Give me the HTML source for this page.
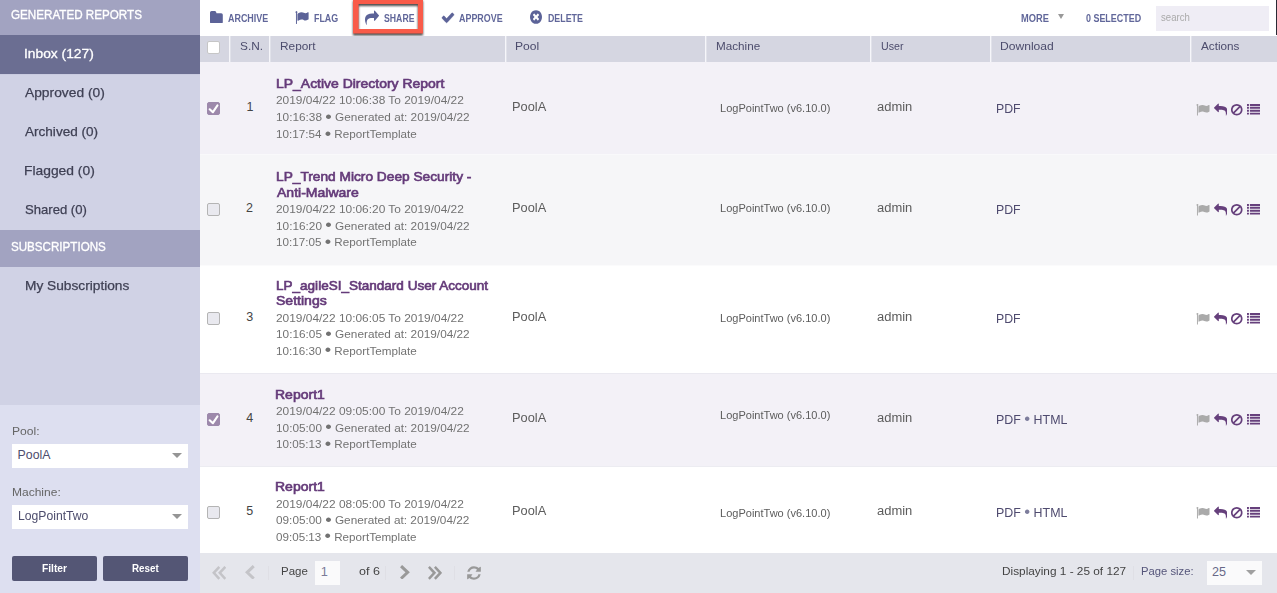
<!DOCTYPE html>
<html lang="en"><head><meta charset="utf-8"><title>Generated Reports</title>
<style>
*{box-sizing:border-box}
html,body{margin:0;padding:0}
body{width:1277px;height:593px;overflow:hidden;position:relative;background:#fff;font-family:"Liberation Sans",sans-serif;color:#444}
.abs{position:absolute}
.ic{position:absolute;display:block}
.bl{font-style:normal;font-size:17px;line-height:0;position:relative;top:0.5px}
.dlb .bl{color:#7d7d9c;top:0.3px}
.x{position:absolute;display:block;white-space:nowrap;transform-origin:0 50%}
#side{position:absolute;left:0;top:0;width:200px;height:593px;background:#d0d2e5}
.sh{position:absolute;left:0;width:200px;background:#a2a3c1}
.si{position:absolute;left:0;width:200px;height:39px}
.si.act{background:#6b6e92}
#filt{position:absolute;left:0;top:405px;width:200px;height:188px;background:#dddff0}
.sel{position:absolute;left:12px;width:176px;height:24px;background:#fff}
.sel:after{content:"";position:absolute;right:6.500px;top:8.500px;border-left:5px solid transparent;border-right:5px solid transparent;border-top:5.500px solid #959595}
.btn{position:absolute;top:556px;width:85px;height:25px;border-radius:2px;background:#545675}
#tb{position:absolute;left:0;top:0;width:1277px;height:36px}
#hl{position:absolute;left:349px;top:-4px;filter:drop-shadow(0.5px 2.5px 1px rgba(0,0,0,.7))}
#th{position:absolute;left:200px;top:36px;width:1077px;height:26px;background:#d5d6e1}
.sep{position:absolute;top:36px;width:1px;height:26px;background:#f6f6fa;box-shadow:1px 0 0 rgba(255,255,255,.3)}
.row{position:absolute;left:200px;width:1077px}
.cb{position:absolute;left:207px;width:13px;height:13px;border:1px solid #b4b4b4;border-radius:2px;background:#e9e9ef}
.cb.on{background:#9d89ab;border-color:#9d89ab}
#ft{position:absolute;left:200px;top:553px;width:1077px;height:40px;background:#e5e6ec}
</style></head>
<body>
<div id="side">
<div class="sh" style="top:0;height:35px"></div>
<div class="si act" style="top:35px"></div>
<div class="sh" style="top:230px;height:37px"></div>
<div id="filt"></div>
<div class="abs" style="left:0;top:74px;width:200px;height:1px;background:#c9cbe0"></div>
<span class="x" style="left:10.9px;top:7.3px;font-size:12.8px;line-height:15px;color:#fff;transform:scaleX(0.910);-webkit-text-stroke:0.35px #fff;">GENERATED REPORTS</span>
<span class="x" style="left:24.0px;top:46.0px;font-size:13.2px;line-height:15px;color:#fff;transform:scaleX(1.046);-webkit-text-stroke:0.3px #fff;">Inbox (127)</span>
<span class="x" style="left:25.2px;top:85.0px;font-size:13.2px;line-height:15px;color:#3f4054;transform:scaleX(1.046);-webkit-text-stroke:0.25px #3f4054;">Approved (0)</span>
<span class="x" style="left:25.2px;top:124.0px;font-size:13.2px;line-height:15px;color:#3f4054;transform:scaleX(1.028);-webkit-text-stroke:0.25px #3f4054;">Archived (0)</span>
<span class="x" style="left:24.2px;top:163.0px;font-size:13.2px;line-height:15px;color:#3f4054;transform:scaleX(1.049);-webkit-text-stroke:0.25px #3f4054;">Flagged (0)</span>
<span class="x" style="left:24.7px;top:202.0px;font-size:13.2px;line-height:15px;color:#3f4054;transform:scaleX(0.993);-webkit-text-stroke:0.25px #3f4054;">Shared (0)</span>
<span class="x" style="left:11.0px;top:239.0px;font-size:12.8px;line-height:15px;color:#fff;transform:scaleX(0.907);-webkit-text-stroke:0.35px #fff;">SUBSCRIPTIONS</span>
<span class="x" style="left:24.5px;top:277.9px;font-size:13.2px;line-height:15px;color:#3f4054;transform:scaleX(1.039);-webkit-text-stroke:0.25px #3f4054;">My Subscriptions</span>
<span class="x" style="left:11.8px;top:424.8px;font-size:10.7px;line-height:12px;color:#666;transform:scaleX(1.132);">Pool:</span>
<div class="sel" style="top:444px"></div>
<span class="x" style="left:17.6px;top:447.9px;font-size:12.3px;line-height:14px;color:#4d4d6d;">PoolA</span>
<span class="x" style="left:11.8px;top:485.8px;font-size:10.7px;line-height:12px;color:#666;transform:scaleX(1.124);">Machine:</span>
<div class="sel" style="top:505px"></div>
<span class="x" style="left:17.7px;top:508.9px;font-size:12.3px;line-height:14px;color:#4d4d6d;transform:scaleX(0.990);">LogPointTwo</span>
<div class="btn" style="left:12px"></div><div class="btn" style="left:103px"></div>
<span class="x" style="left:42.0px;top:562.1px;font-size:11px;line-height:12px;color:#fff;font-weight:bold;transform:scaleX(0.931);">Filter</span>
<span class="x" style="left:132.2px;top:562.1px;font-size:11px;line-height:12px;color:#fff;font-weight:bold;transform:scaleX(0.894);">Reset</span>
</div>
<div id="tb">
<svg class="ic" style="left:209.9px;top:10.5px" width="12.8" height="12.6" viewBox="0 0 13 13" preserveAspectRatio="none"><path fill="#5c6398" d="M1.600 0h3.200q1 0 1.400 1l.4 1.200h4.800q1.600 0 1.600 1.600v7.600q0 1.600-1.600 1.600h-9.800q-1.600 0-1.600-1.600v-9.800q0-1.600 1.600-1.600z"/></svg>
<span class="x" style="left:228.2px;top:11.6px;font-size:10.6px;line-height:12px;color:#61679a;font-weight:bold;transform:scaleX(0.844);">ARCHIVE</span>
<svg class="ic" style="left:295.4px;top:9.85px" width="13.6" height="15" viewBox="0 0 1792 1792" preserveAspectRatio="none"><path fill="#5c6398" d="M320 256q0 72-64 110v1266q0 13-9.500 22.500t-22.500 9.500h-64q-13 0-22.500-9.500t-9.500-22.500v-1266q-64-38-64-110 0-53 37.500-90.500t90.500-37.500 90.500 37.500 37.500 90.500zM1792 320v763q0 25-12.500 38.500t-39.500 27.500q-215 116-369 116-61 0-123.500-22t-108.500-48-115.500-48-142.500-22q-192 0-464 146-17 9-33 9-26 0-45-19t-19-45v-742q0-32 31-55 21-14 79-43 236-120 421-120 107 0 200 29t219 88q38 19 88 19 54 0 117.500-21t110-47 88-47 54.500-21q26 0 45 19t19 45z"/></svg>
<span class="x" style="left:314.1px;top:11.6px;font-size:10.6px;line-height:12px;color:#61679a;font-weight:bold;transform:scaleX(0.840);">FLAG</span>
<svg class="ic" style="left:364.8px;top:9.55px" width="14" height="16" viewBox="0 0 1792 1792" preserveAspectRatio="none"><path fill="#5c6398" d="M1792 640q0 26-19 45l-512 512q-19 19-45 19t-45-19-19-45v-256h-224q-98 0-175.500 6t-154 21.500-133 42.500-105.500 69.500-80 101-48.500 138.500-17.500 181q0 55 5 123 0 6 2.500 23.500t2.500 26.500q0 15-8.500 25t-23.500 10q-16 0-28-17-7-9-13-22t-13.500-30-10.500-24q-127-285-127-451 0-199 53-333 162-403 875-403h224v-256q0-26 19-45t45-19 45 19l512 512q19 19 19 45z"/></svg>
<span class="x" style="left:383.5px;top:11.6px;font-size:10.6px;line-height:12px;color:#61679a;font-weight:bold;transform:scaleX(0.822);">SHARE</span>
<svg class="ic" style="left:440.65px;top:10.3px" width="14" height="15.1" viewBox="0 0 1792 1792" preserveAspectRatio="none"><path fill="#5c6398" stroke="#5c6398" stroke-width="40" d="M1671 566q0 40-28 68l-724 724-136 136q-28 28-68 28t-68-28l-136-136-362-362q-28-28-28-68t28-68l136-136q28-28 68-28t68 28l294 295 656-657q28-28 68-28t68 28l136 136q28 28 28 68z"/></svg>
<span class="x" style="left:459.0px;top:11.6px;font-size:10.6px;line-height:12px;color:#61679a;font-weight:bold;transform:scaleX(0.842);">APPROVE</span>
<svg class="ic" style="left:529px;top:9.35px" width="14" height="16" viewBox="0 0 1792 1792" preserveAspectRatio="none"><path fill="#5c6398" d="M1277 1122q0-26-19-45l-181-181 181-181q19-19 19-45 0-27-19-46l-90-90q-19-19-46-19-26 0-45 19l-181 181-181-181q-19-19-45-19-27 0-46 19l-90 90q-19 19-19 46 0 26 19 45l181 181-181 181q-19 19-19 45 0 27 19 46l90 90q19 19 46 19 26 0 45-19l181-181 181 181q19 19 45 19 27 0 46-19l90-90q19-19 19-46zM1664 896q0 209-103 385.500t-279.500 279.500-385.500 103-385.500-103-279.500-279.500-103-385.500 103-385.500 279.500-279.500 385.500-103 385.500 103 279.500 279.500 103 385.500z"/></svg>
<span class="x" style="left:547.6px;top:11.6px;font-size:10.6px;line-height:12px;color:#61679a;font-weight:bold;transform:scaleX(0.833);">DELETE</span>
<span class="x" style="left:1021.4px;top:11.6px;font-size:10.6px;line-height:12px;color:#61679a;font-weight:bold;transform:scaleX(0.877);">MORE</span>
<div class="abs" style="left:1057.5px;top:14px;border-left:3.5px solid transparent;border-right:3.5px solid transparent;border-top:5px solid #999"></div>
<span class="x" style="left:1085.7px;top:11.6px;font-size:10.6px;line-height:12px;color:#61679a;font-weight:bold;transform:scaleX(0.843);">0 SELECTED</span>
<div class="abs" style="left:1156px;top:5.5px;width:112.5px;height:25px;background:#efedf5"></div>
<span class="x" style="left:1160.7px;top:11.2px;font-size:11px;line-height:12px;color:#aaa;transform:scaleX(0.872);">search</span>
<div class="abs" style="left:1275.5px;top:0;width:1.5px;height:35px;background:#2a2a35"></div>
</div>
<svg id="hl" width="80" height="44" viewBox="349 -4 80 44"><path fill="#f95b49" fill-rule="evenodd" d="M353 -1H423V33.6H353ZM358.6 4.100H417.9V28.900H358.6Z"/></svg>
<div id="th"></div>
<div class="cb" style="top:41px;background:#fff;border-color:#c6c6c6"></div>
<span class="x" style="left:239.6px;top:40.1px;font-size:10.9px;line-height:12px;color:#4c4c6c;transform:scaleX(1.086);">S.N.</span>
<span class="x" style="left:279.6px;top:40.1px;font-size:10.9px;line-height:12px;color:#4c4c6c;transform:scaleX(1.087);">Report</span>
<span class="x" style="left:515.4px;top:40.1px;font-size:10.9px;line-height:12px;color:#4c4c6c;transform:scaleX(1.109);">Pool</span>
<span class="x" style="left:715.5px;top:40.1px;font-size:10.9px;line-height:12px;color:#4c4c6c;transform:scaleX(1.072);">Machine</span>
<span class="x" style="left:881.0px;top:40.1px;font-size:10.9px;line-height:12px;color:#4c4c6c;transform:scaleX(0.978);">User</span>
<span class="x" style="left:1000.0px;top:40.1px;font-size:10.9px;line-height:12px;color:#4c4c6c;transform:scaleX(1.111);">Download</span>
<span class="x" style="left:1201.3px;top:40.1px;font-size:10.9px;line-height:12px;color:#4c4c6c;transform:scaleX(1.076);">Actions</span>
<div class="sep" style="left:229px"></div>
<div class="sep" style="left:269px"></div>
<div class="sep" style="left:505px"></div>
<div class="sep" style="left:705px"></div>
<div class="sep" style="left:870px"></div>
<div class="sep" style="left:990px"></div>
<div class="sep" style="left:1190px"></div>
<div class="row" style="top:62px;height:92px;background:#f3f1f7;border-top:1px solid #f3f1f7"></div>
<div class="cb on" style="top:102px"><svg class="ic" style="left:-1px;top:-1px" width="13" height="13" viewBox="0 0 13 13"><path d="M2.700 7.300L5.900 10.200L10.400 3.500" fill="none" stroke="#fff" stroke-width="2.200" stroke-linecap="round" stroke-linejoin="round"/></svg></div>
<span class="x" style="left:246.4px;top:100.0px;font-size:12.5px;line-height:14px;color:#444;">1</span>
<span class="x" style="left:275.5px;top:76.2px;font-size:13.2px;line-height:15px;color:#643a79;transform:scaleX(1.058);-webkit-text-stroke:0.65px #643a79;">LP_Active Directory Report</span>
<span class="x" style="left:276.0px;top:94.1px;font-size:10.8px;line-height:12px;color:#727272;transform:scaleX(1.103);">2019/04/22 10:06:38 To 2019/04/22</span>
<span class="x" style="left:275.7px;top:111.0px;font-size:10.8px;line-height:12px;color:#727272;transform:scaleX(1.094);">10:16:38 <i class="bl">&bull;</i> Generated at: 2019/04/22</span>
<span class="x" style="left:275.7px;top:128.0px;font-size:10.8px;line-height:12px;color:#727272;transform:scaleX(1.081);">10:17:54 <i class="bl">&bull;</i> ReportTemplate</span>
<span class="x" style="left:511.5px;top:100.0px;font-size:12.5px;line-height:14px;color:#5c5c5c;transform:scaleX(1.025);">PoolA</span>
<span class="x" style="left:720.3px;top:102.8px;font-size:10.4px;line-height:11px;color:#5c5c5c;transform:scaleX(1.061);">LogPointTwo (v6.10.0)</span>
<span class="x" style="left:876.6px;top:100.1px;font-size:12.5px;line-height:14px;color:#5c5c5c;transform:scaleX(1.037);">admin</span>
<span class="x dlb" style="left:996.3px;top:102.1px;font-size:12.6px;line-height:14px;color:#4f4b6f;transform:scaleX(0.976);">PDF</span>
<svg class="ic " style="left:1196.4px;top:102.5px" width="13.5" height="13.5" viewBox="0 0 1792 1792"><path fill="#aaaaaa" d="M320 256q0 72-64 110v1266q0 13-9.500 22.500t-22.500 9.500h-64q-13 0-22.500-9.500t-9.500-22.500v-1266q-64-38-64-110 0-53 37.500-90.500t90.500-37.500 90.500 37.500 37.500 90.500zM1792 320v763q0 25-12.500 38.500t-39.500 27.500q-215 116-369 116-61 0-123.500-22t-108.500-48-115.500-48-142.500-22q-192 0-464 146-17 9-33 9-26 0-45-19t-19-45v-742q0-32 31-55 21-14 79-43 236-120 421-120 107 0 200 29t219 88q38 19 88 19 54 0 117.500-21t110-47 88-47 54.500-21q26 0 45 19t19 45z"/></svg>
<svg class="ic " style="left:1213.9px;top:102.5px" width="13.5" height="13.5" viewBox="0 0 1792 1792"><path fill="#66407c" d="M1792 1120q0 166-127 451-3 7-10.500 24t-13.500 30-13 22q-12 17-28 17-15 0-23.500-10t-8.500-25q0-9 2.500-26.500t2.500-23.500q5-68 5-123 0-101-17.500-181t-48.500-138.500-80-101-105.500-69.500-133-42.500-154-21.500-175.500-6h-224v256q0 26-19 45t-45 19-45-19l-512-512q-19-19-19-45t19-45l512-512q19-19 45-19t45 19 19 45v256h224q713 0 875 403 53 134 53 333z"/></svg>
<svg class="ic " style="left:1230.1px;top:102.5px" width="13.5" height="13.5" viewBox="0 0 1792 1792"><path fill="#66407c" d="M1440 893q0-161-87-295l-754 753q137 89 297 89 111 0 211.500-43.500t173.500-116.500 116-174.500 43-212.500zM439 1194l755-754q-135-91-298-91-148 0-273 73t-198 199-73 274q0 162 88 299zM1664 893q0 157-61 300t-163.500 246-245 164-298.500 61-298.500-61-245-164-163.500-246-61-300 61-299.500 163.500-245.500 245-164 298.500-61 298.500 61 245 164 163.500 245.500 61 299.500z"/></svg>
<svg class="ic " style="left:1246.7px;top:102.5px" width="13.5" height="13.5" viewBox="0 0 1792 1792"><path fill="#66407c" d="M256 1312v192q0 13-9.500 22.500t-22.500 9.500h-192q-13 0-22.500-9.500t-9.500-22.500v-192q0-13 9.500-22.500t22.500-9.500h192q13 0 22.500 9.500t9.500 22.500zM256 928v192q0 13-9.500 22.500t-22.500 9.500h-192q-13 0-22.500-9.500t-9.500-22.500v-192q0-13 9.500-22.500t22.500-9.500h192q13 0 22.500 9.500t9.500 22.500zM256 544v192q0 13-9.500 22.500t-22.500 9.500h-192q-13 0-22.500-9.500t-9.500-22.500v-192q0-13 9.500-22.500t22.500-9.500h192q13 0 22.500 9.500t9.500 22.500zM1792 1312v192q0 13-9.500 22.500t-22.500 9.500h-1344q-13 0-22.500-9.500t-9.500-22.500v-192q0-13 9.500-22.500t22.500-9.500h1344q13 0 22.500 9.500t9.500 22.500zM256 160v192q0 13-9.500 22.500t-22.500 9.500h-192q-13 0-22.500-9.500t-9.500-22.500v-192q0-13 9.500-22.500t22.500-9.500h192q13 0 22.500 9.500t9.500 22.500zM1792 928v192q0 13-9.500 22.500t-22.500 9.500h-1344q-13 0-22.500-9.500t-9.500-22.500v-192q0-13 9.500-22.500t22.500-9.500h1344q13 0 22.500 9.500t9.500 22.500zM1792 544v192q0 13-9.500 22.500t-22.500 9.500h-1344q-13 0-22.500-9.500t-9.500-22.500v-192q0-13 9.500-22.500t22.500-9.500h1344q13 0 22.500 9.500t9.500 22.500zM1792 160v192q0 13-9.500 22.500t-22.500 9.500h-1344q-13 0-22.500-9.500t-9.500-22.500v-192q0-13 9.500-22.500t22.500-9.500h1344q13 0 22.500 9.500t9.500 22.500z"/></svg>
<div class="row" style="top:154px;height:111px;background:#f6f6f8;border-top:1px solid #f9f9fb"></div>
<div class="cb" style="top:203px"></div>
<span class="x" style="left:246.1px;top:200.8px;font-size:12.5px;line-height:14px;color:#444;">2</span>
<span class="x" style="left:275.5px;top:168.5px;font-size:13.2px;line-height:15px;color:#643a79;transform:scaleX(1.040);-webkit-text-stroke:0.65px #643a79;">LP_Trend Micro Deep Security -</span>
<span class="x" style="left:276.6px;top:184.5px;font-size:13.2px;line-height:15px;color:#643a79;transform:scaleX(1.063);-webkit-text-stroke:0.65px #643a79;">Anti-Malware</span>
<span class="x" style="left:276.0px;top:202.7px;font-size:10.8px;line-height:12px;color:#727272;transform:scaleX(1.103);">2019/04/22 10:06:20 To 2019/04/22</span>
<span class="x" style="left:275.7px;top:219.5px;font-size:10.8px;line-height:12px;color:#727272;transform:scaleX(1.094);">10:16:20 <i class="bl">&bull;</i> Generated at: 2019/04/22</span>
<span class="x" style="left:275.7px;top:236.3px;font-size:10.8px;line-height:12px;color:#727272;transform:scaleX(1.081);">10:17:05 <i class="bl">&bull;</i> ReportTemplate</span>
<span class="x" style="left:511.5px;top:200.8px;font-size:12.5px;line-height:14px;color:#5c5c5c;transform:scaleX(1.025);">PoolA</span>
<span class="x" style="left:720.3px;top:203.4px;font-size:10.4px;line-height:11px;color:#5c5c5c;transform:scaleX(1.061);">LogPointTwo (v6.10.0)</span>
<span class="x" style="left:876.6px;top:200.9px;font-size:12.5px;line-height:14px;color:#5c5c5c;transform:scaleX(1.037);">admin</span>
<span class="x dlb" style="left:996.3px;top:202.9px;font-size:12.6px;line-height:14px;color:#4f4b6f;transform:scaleX(0.976);">PDF</span>
<svg class="ic " style="left:1196.4px;top:203.4px" width="13.5" height="13.5" viewBox="0 0 1792 1792"><path fill="#aaaaaa" d="M320 256q0 72-64 110v1266q0 13-9.500 22.500t-22.500 9.500h-64q-13 0-22.500-9.500t-9.500-22.500v-1266q-64-38-64-110 0-53 37.500-90.500t90.500-37.500 90.500 37.500 37.500 90.500zM1792 320v763q0 25-12.500 38.500t-39.500 27.500q-215 116-369 116-61 0-123.500-22t-108.500-48-115.500-48-142.500-22q-192 0-464 146-17 9-33 9-26 0-45-19t-19-45v-742q0-32 31-55 21-14 79-43 236-120 421-120 107 0 200 29t219 88q38 19 88 19 54 0 117.500-21t110-47 88-47 54.500-21q26 0 45 19t19 45z"/></svg>
<svg class="ic " style="left:1213.9px;top:203.4px" width="13.5" height="13.5" viewBox="0 0 1792 1792"><path fill="#66407c" d="M1792 1120q0 166-127 451-3 7-10.500 24t-13.500 30-13 22q-12 17-28 17-15 0-23.500-10t-8.500-25q0-9 2.500-26.500t2.500-23.500q5-68 5-123 0-101-17.500-181t-48.500-138.500-80-101-105.500-69.500-133-42.500-154-21.500-175.500-6h-224v256q0 26-19 45t-45 19-45-19l-512-512q-19-19-19-45t19-45l512-512q19-19 45-19t45 19 19 45v256h224q713 0 875 403 53 134 53 333z"/></svg>
<svg class="ic " style="left:1230.1px;top:203.4px" width="13.5" height="13.5" viewBox="0 0 1792 1792"><path fill="#66407c" d="M1440 893q0-161-87-295l-754 753q137 89 297 89 111 0 211.500-43.500t173.500-116.500 116-174.500 43-212.500zM439 1194l755-754q-135-91-298-91-148 0-273 73t-198 199-73 274q0 162 88 299zM1664 893q0 157-61 300t-163.500 246-245 164-298.500 61-298.500-61-245-164-163.500-246-61-300 61-299.500 163.500-245.500 245-164 298.500-61 298.500 61 245 164 163.500 245.500 61 299.500z"/></svg>
<svg class="ic " style="left:1246.7px;top:203.4px" width="13.5" height="13.5" viewBox="0 0 1792 1792"><path fill="#66407c" d="M256 1312v192q0 13-9.500 22.500t-22.500 9.500h-192q-13 0-22.500-9.500t-9.500-22.500v-192q0-13 9.500-22.500t22.500-9.500h192q13 0 22.500 9.500t9.500 22.500zM256 928v192q0 13-9.500 22.500t-22.500 9.500h-192q-13 0-22.500-9.500t-9.500-22.500v-192q0-13 9.500-22.500t22.500-9.500h192q13 0 22.500 9.500t9.500 22.500zM256 544v192q0 13-9.500 22.500t-22.500 9.500h-192q-13 0-22.500-9.500t-9.500-22.500v-192q0-13 9.500-22.500t22.500-9.500h192q13 0 22.500 9.500t9.500 22.500zM1792 1312v192q0 13-9.500 22.500t-22.500 9.500h-1344q-13 0-22.500-9.500t-9.500-22.500v-192q0-13 9.500-22.500t22.500-9.500h1344q13 0 22.500 9.500t9.500 22.500zM256 160v192q0 13-9.500 22.500t-22.500 9.500h-192q-13 0-22.500-9.500t-9.500-22.500v-192q0-13 9.500-22.500t22.500-9.500h192q13 0 22.500 9.500t9.500 22.500zM1792 928v192q0 13-9.500 22.500t-22.500 9.500h-1344q-13 0-22.500-9.500t-9.500-22.500v-192q0-13 9.500-22.500t22.500-9.500h1344q13 0 22.500 9.500t9.500 22.500zM1792 544v192q0 13-9.500 22.500t-22.500 9.500h-1344q-13 0-22.500-9.500t-9.500-22.500v-192q0-13 9.500-22.500t22.500-9.500h1344q13 0 22.500 9.500t9.500 22.500zM1792 160v192q0 13-9.500 22.500t-22.500 9.500h-1344q-13 0-22.500-9.500t-9.500-22.500v-192q0-13 9.500-22.500t22.500-9.500h1344q13 0 22.500 9.500t9.500 22.500z"/></svg>
<div class="row" style="top:265px;height:108px;background:#ffffff;border-top:1px solid #fbfbfc"></div>
<div class="cb" style="top:312px"></div>
<span class="x" style="left:246.2px;top:310.1px;font-size:12.5px;line-height:14px;color:#444;">3</span>
<span class="x" style="left:275.5px;top:277.8px;font-size:13.2px;line-height:15px;color:#643a79;transform:scaleX(1.026);-webkit-text-stroke:0.65px #643a79;">LP_agileSI_Standard User Account</span>
<span class="x" style="left:276.0px;top:293.4px;font-size:13.2px;line-height:15px;color:#643a79;transform:scaleX(1.064);-webkit-text-stroke:0.65px #643a79;">Settings</span>
<span class="x" style="left:276.0px;top:311.6px;font-size:10.8px;line-height:12px;color:#727272;transform:scaleX(1.103);">2019/04/22 10:06:05 To 2019/04/22</span>
<span class="x" style="left:275.7px;top:328.1px;font-size:10.8px;line-height:12px;color:#727272;transform:scaleX(1.094);">10:16:05 <i class="bl">&bull;</i> Generated at: 2019/04/22</span>
<span class="x" style="left:275.7px;top:344.9px;font-size:10.8px;line-height:12px;color:#727272;transform:scaleX(1.081);">10:16:30 <i class="bl">&bull;</i> ReportTemplate</span>
<span class="x" style="left:511.5px;top:310.1px;font-size:12.5px;line-height:14px;color:#5c5c5c;transform:scaleX(1.025);">PoolA</span>
<span class="x" style="left:720.3px;top:312.8px;font-size:10.4px;line-height:11px;color:#5c5c5c;transform:scaleX(1.061);">LogPointTwo (v6.10.0)</span>
<span class="x" style="left:876.6px;top:310.1px;font-size:12.5px;line-height:14px;color:#5c5c5c;transform:scaleX(1.037);">admin</span>
<span class="x dlb" style="left:996.3px;top:312.2px;font-size:12.6px;line-height:14px;color:#4f4b6f;transform:scaleX(0.976);">PDF</span>
<svg class="ic " style="left:1196.4px;top:312.2px" width="13.5" height="13.5" viewBox="0 0 1792 1792"><path fill="#aaaaaa" d="M320 256q0 72-64 110v1266q0 13-9.500 22.500t-22.500 9.500h-64q-13 0-22.500-9.500t-9.500-22.500v-1266q-64-38-64-110 0-53 37.500-90.500t90.500-37.500 90.500 37.500 37.500 90.500zM1792 320v763q0 25-12.500 38.500t-39.500 27.500q-215 116-369 116-61 0-123.500-22t-108.500-48-115.500-48-142.500-22q-192 0-464 146-17 9-33 9-26 0-45-19t-19-45v-742q0-32 31-55 21-14 79-43 236-120 421-120 107 0 200 29t219 88q38 19 88 19 54 0 117.500-21t110-47 88-47 54.500-21q26 0 45 19t19 45z"/></svg>
<svg class="ic " style="left:1213.9px;top:312.2px" width="13.5" height="13.5" viewBox="0 0 1792 1792"><path fill="#66407c" d="M1792 1120q0 166-127 451-3 7-10.500 24t-13.500 30-13 22q-12 17-28 17-15 0-23.500-10t-8.500-25q0-9 2.500-26.500t2.500-23.500q5-68 5-123 0-101-17.500-181t-48.500-138.500-80-101-105.500-69.500-133-42.500-154-21.500-175.500-6h-224v256q0 26-19 45t-45 19-45-19l-512-512q-19-19-19-45t19-45l512-512q19-19 45-19t45 19 19 45v256h224q713 0 875 403 53 134 53 333z"/></svg>
<svg class="ic " style="left:1230.1px;top:312.2px" width="13.5" height="13.5" viewBox="0 0 1792 1792"><path fill="#66407c" d="M1440 893q0-161-87-295l-754 753q137 89 297 89 111 0 211.500-43.500t173.500-116.500 116-174.500 43-212.500zM439 1194l755-754q-135-91-298-91-148 0-273 73t-198 199-73 274q0 162 88 299zM1664 893q0 157-61 300t-163.500 246-245 164-298.500 61-298.500-61-245-164-163.500-246-61-300 61-299.500 163.500-245.500 245-164 298.500-61 298.500 61 245 164 163.500 245.500 61 299.500z"/></svg>
<svg class="ic " style="left:1246.7px;top:312.2px" width="13.5" height="13.5" viewBox="0 0 1792 1792"><path fill="#66407c" d="M256 1312v192q0 13-9.500 22.500t-22.500 9.500h-192q-13 0-22.500-9.500t-9.500-22.500v-192q0-13 9.500-22.500t22.500-9.500h192q13 0 22.500 9.500t9.500 22.500zM256 928v192q0 13-9.500 22.500t-22.500 9.500h-192q-13 0-22.500-9.500t-9.500-22.500v-192q0-13 9.500-22.500t22.500-9.500h192q13 0 22.500 9.500t9.500 22.500zM256 544v192q0 13-9.500 22.500t-22.500 9.500h-192q-13 0-22.500-9.500t-9.500-22.500v-192q0-13 9.500-22.500t22.500-9.500h192q13 0 22.500 9.500t9.500 22.500zM1792 1312v192q0 13-9.500 22.500t-22.500 9.500h-1344q-13 0-22.500-9.500t-9.500-22.500v-192q0-13 9.500-22.500t22.500-9.500h1344q13 0 22.500 9.500t9.500 22.500zM256 160v192q0 13-9.500 22.500t-22.500 9.500h-192q-13 0-22.500-9.500t-9.500-22.500v-192q0-13 9.500-22.500t22.500-9.500h192q13 0 22.500 9.500t9.500 22.500zM1792 928v192q0 13-9.500 22.500t-22.500 9.500h-1344q-13 0-22.500-9.500t-9.500-22.500v-192q0-13 9.500-22.500t22.500-9.500h1344q13 0 22.500 9.500t9.500 22.500zM1792 544v192q0 13-9.500 22.500t-22.500 9.500h-1344q-13 0-22.500-9.500t-9.500-22.500v-192q0-13 9.500-22.500t22.500-9.500h1344q13 0 22.500 9.500t9.500 22.500zM1792 160v192q0 13-9.500 22.500t-22.500 9.500h-1344q-13 0-22.500-9.500t-9.500-22.500v-192q0-13 9.500-22.500t22.500-9.500h1344q13 0 22.500 9.500t9.500 22.500z"/></svg>
<div class="row" style="top:373px;height:93px;background:#f3f1f7;border-top:1px solid #eae9f0"></div>
<div class="cb on" style="top:413px"><svg class="ic" style="left:-1px;top:-1px" width="13" height="13" viewBox="0 0 13 13"><path d="M2.700 7.300L5.900 10.200L10.400 3.500" fill="none" stroke="#fff" stroke-width="2.200" stroke-linecap="round" stroke-linejoin="round"/></svg></div>
<span class="x" style="left:246.2px;top:410.8px;font-size:12.5px;line-height:14px;color:#444;">4</span>
<span class="x" style="left:275.4px;top:386.6px;font-size:13.2px;line-height:15px;color:#643a79;transform:scaleX(1.063);-webkit-text-stroke:0.65px #643a79;">Report1</span>
<span class="x" style="left:276.0px;top:404.8px;font-size:10.8px;line-height:12px;color:#727272;transform:scaleX(1.103);">2019/04/22 09:05:00 To 2019/04/22</span>
<span class="x" style="left:275.7px;top:421.6px;font-size:10.8px;line-height:12px;color:#727272;transform:scaleX(1.094);">10:05:00 <i class="bl">&bull;</i> Generated at: 2019/04/22</span>
<span class="x" style="left:275.7px;top:438.4px;font-size:10.8px;line-height:12px;color:#727272;transform:scaleX(1.081);">10:05:13 <i class="bl">&bull;</i> ReportTemplate</span>
<span class="x" style="left:511.5px;top:410.8px;font-size:12.5px;line-height:14px;color:#5c5c5c;transform:scaleX(1.025);">PoolA</span>
<span class="x" style="left:720.3px;top:409.8px;font-size:10.4px;line-height:11px;color:#5c5c5c;transform:scaleX(1.061);">LogPointTwo (v6.10.0)</span>
<span class="x" style="left:876.6px;top:410.9px;font-size:12.5px;line-height:14px;color:#5c5c5c;transform:scaleX(1.037);">admin</span>
<span class="x dlb" style="left:996.3px;top:412.9px;font-size:12.6px;line-height:14px;color:#4f4b6f;transform:scaleX(0.986);">PDF <i class="bl">&bull;</i> HTML</span>
<svg class="ic " style="left:1196.4px;top:413.1px" width="13.5" height="13.5" viewBox="0 0 1792 1792"><path fill="#aaaaaa" d="M320 256q0 72-64 110v1266q0 13-9.500 22.500t-22.500 9.500h-64q-13 0-22.500-9.500t-9.500-22.500v-1266q-64-38-64-110 0-53 37.500-90.500t90.500-37.500 90.500 37.500 37.500 90.500zM1792 320v763q0 25-12.500 38.500t-39.500 27.500q-215 116-369 116-61 0-123.500-22t-108.500-48-115.500-48-142.500-22q-192 0-464 146-17 9-33 9-26 0-45-19t-19-45v-742q0-32 31-55 21-14 79-43 236-120 421-120 107 0 200 29t219 88q38 19 88 19 54 0 117.500-21t110-47 88-47 54.500-21q26 0 45 19t19 45z"/></svg>
<svg class="ic " style="left:1213.9px;top:413.1px" width="13.5" height="13.5" viewBox="0 0 1792 1792"><path fill="#66407c" d="M1792 1120q0 166-127 451-3 7-10.500 24t-13.500 30-13 22q-12 17-28 17-15 0-23.500-10t-8.500-25q0-9 2.500-26.500t2.500-23.500q5-68 5-123 0-101-17.500-181t-48.500-138.500-80-101-105.500-69.500-133-42.500-154-21.500-175.500-6h-224v256q0 26-19 45t-45 19-45-19l-512-512q-19-19-19-45t19-45l512-512q19-19 45-19t45 19 19 45v256h224q713 0 875 403 53 134 53 333z"/></svg>
<svg class="ic " style="left:1230.1px;top:413.1px" width="13.5" height="13.5" viewBox="0 0 1792 1792"><path fill="#66407c" d="M1440 893q0-161-87-295l-754 753q137 89 297 89 111 0 211.500-43.500t173.500-116.500 116-174.500 43-212.500zM439 1194l755-754q-135-91-298-91-148 0-273 73t-198 199-73 274q0 162 88 299zM1664 893q0 157-61 300t-163.500 246-245 164-298.500 61-298.500-61-245-164-163.500-246-61-300 61-299.500 163.500-245.500 245-164 298.500-61 298.500 61 245 164 163.500 245.500 61 299.500z"/></svg>
<svg class="ic " style="left:1246.7px;top:413.1px" width="13.5" height="13.5" viewBox="0 0 1792 1792"><path fill="#66407c" d="M256 1312v192q0 13-9.500 22.500t-22.500 9.500h-192q-13 0-22.500-9.500t-9.500-22.500v-192q0-13 9.500-22.500t22.500-9.500h192q13 0 22.500 9.500t9.500 22.500zM256 928v192q0 13-9.500 22.500t-22.500 9.500h-192q-13 0-22.500-9.500t-9.500-22.500v-192q0-13 9.500-22.500t22.500-9.500h192q13 0 22.500 9.500t9.500 22.500zM256 544v192q0 13-9.500 22.500t-22.500 9.500h-192q-13 0-22.500-9.500t-9.500-22.500v-192q0-13 9.500-22.500t22.500-9.500h192q13 0 22.500 9.500t9.500 22.500zM1792 1312v192q0 13-9.500 22.500t-22.500 9.500h-1344q-13 0-22.500-9.500t-9.500-22.500v-192q0-13 9.500-22.500t22.500-9.500h1344q13 0 22.500 9.500t9.500 22.500zM256 160v192q0 13-9.500 22.500t-22.500 9.500h-192q-13 0-22.500-9.500t-9.500-22.500v-192q0-13 9.500-22.500t22.500-9.500h192q13 0 22.500 9.500t9.500 22.500zM1792 928v192q0 13-9.500 22.500t-22.500 9.500h-1344q-13 0-22.500-9.500t-9.500-22.500v-192q0-13 9.500-22.500t22.500-9.500h1344q13 0 22.500 9.500t9.500 22.500zM1792 544v192q0 13-9.500 22.500t-22.500 9.500h-1344q-13 0-22.500-9.500t-9.500-22.500v-192q0-13 9.500-22.500t22.500-9.500h1344q13 0 22.500 9.500t9.500 22.500zM1792 160v192q0 13-9.500 22.500t-22.500 9.500h-1344q-13 0-22.500-9.500t-9.500-22.500v-192q0-13 9.500-22.500t22.500-9.500h1344q13 0 22.500 9.500t9.500 22.500z"/></svg>
<div class="row" style="top:466px;height:87px;background:#ffffff;border-top:1px solid #ececf1"></div>
<div class="cb" style="top:506px"></div>
<span class="x" style="left:246.2px;top:503.8px;font-size:12.5px;line-height:14px;color:#444;">5</span>
<span class="x" style="left:275.4px;top:479.2px;font-size:13.2px;line-height:15px;color:#643a79;transform:scaleX(1.063);-webkit-text-stroke:0.65px #643a79;">Report1</span>
<span class="x" style="left:276.0px;top:497.6px;font-size:10.8px;line-height:12px;color:#727272;transform:scaleX(1.103);">2019/04/22 08:05:00 To 2019/04/22</span>
<span class="x" style="left:276.1px;top:514.0px;font-size:10.8px;line-height:12px;color:#727272;transform:scaleX(1.092);">09:05:00 <i class="bl">&bull;</i> Generated at: 2019/04/22</span>
<span class="x" style="left:276.1px;top:530.7px;font-size:10.8px;line-height:12px;color:#727272;transform:scaleX(1.078);">09:05:13 <i class="bl">&bull;</i> ReportTemplate</span>
<span class="x" style="left:511.5px;top:503.8px;font-size:12.5px;line-height:14px;color:#5c5c5c;transform:scaleX(1.025);">PoolA</span>
<span class="x" style="left:720.3px;top:507.8px;font-size:10.4px;line-height:11px;color:#5c5c5c;transform:scaleX(1.061);">LogPointTwo (v6.10.0)</span>
<span class="x" style="left:876.6px;top:503.8px;font-size:12.5px;line-height:14px;color:#5c5c5c;transform:scaleX(1.037);">admin</span>
<span class="x dlb" style="left:996.3px;top:505.9px;font-size:12.6px;line-height:14px;color:#4f4b6f;transform:scaleX(0.986);">PDF <i class="bl">&bull;</i> HTML</span>
<svg class="ic " style="left:1196.4px;top:506.1px" width="13.5" height="13.5" viewBox="0 0 1792 1792"><path fill="#aaaaaa" d="M320 256q0 72-64 110v1266q0 13-9.500 22.500t-22.500 9.500h-64q-13 0-22.500-9.500t-9.500-22.500v-1266q-64-38-64-110 0-53 37.500-90.500t90.500-37.500 90.500 37.500 37.500 90.500zM1792 320v763q0 25-12.500 38.500t-39.500 27.500q-215 116-369 116-61 0-123.500-22t-108.500-48-115.500-48-142.500-22q-192 0-464 146-17 9-33 9-26 0-45-19t-19-45v-742q0-32 31-55 21-14 79-43 236-120 421-120 107 0 200 29t219 88q38 19 88 19 54 0 117.500-21t110-47 88-47 54.500-21q26 0 45 19t19 45z"/></svg>
<svg class="ic " style="left:1213.9px;top:506.1px" width="13.5" height="13.5" viewBox="0 0 1792 1792"><path fill="#66407c" d="M1792 1120q0 166-127 451-3 7-10.500 24t-13.500 30-13 22q-12 17-28 17-15 0-23.500-10t-8.500-25q0-9 2.500-26.500t2.500-23.500q5-68 5-123 0-101-17.500-181t-48.500-138.500-80-101-105.500-69.500-133-42.500-154-21.500-175.500-6h-224v256q0 26-19 45t-45 19-45-19l-512-512q-19-19-19-45t19-45l512-512q19-19 45-19t45 19 19 45v256h224q713 0 875 403 53 134 53 333z"/></svg>
<svg class="ic " style="left:1230.1px;top:506.1px" width="13.5" height="13.5" viewBox="0 0 1792 1792"><path fill="#66407c" d="M1440 893q0-161-87-295l-754 753q137 89 297 89 111 0 211.500-43.500t173.500-116.500 116-174.500 43-212.500zM439 1194l755-754q-135-91-298-91-148 0-273 73t-198 199-73 274q0 162 88 299zM1664 893q0 157-61 300t-163.500 246-245 164-298.500 61-298.500-61-245-164-163.500-246-61-300 61-299.500 163.500-245.500 245-164 298.500-61 298.500 61 245 164 163.500 245.500 61 299.500z"/></svg>
<svg class="ic " style="left:1246.7px;top:506.1px" width="13.5" height="13.5" viewBox="0 0 1792 1792"><path fill="#66407c" d="M256 1312v192q0 13-9.500 22.500t-22.500 9.500h-192q-13 0-22.500-9.500t-9.500-22.500v-192q0-13 9.500-22.500t22.500-9.500h192q13 0 22.500 9.500t9.500 22.500zM256 928v192q0 13-9.500 22.500t-22.500 9.500h-192q-13 0-22.500-9.500t-9.500-22.500v-192q0-13 9.500-22.500t22.500-9.500h192q13 0 22.500 9.500t9.500 22.500zM256 544v192q0 13-9.500 22.500t-22.500 9.500h-192q-13 0-22.500-9.500t-9.500-22.500v-192q0-13 9.500-22.500t22.500-9.500h192q13 0 22.500 9.500t9.500 22.500zM1792 1312v192q0 13-9.500 22.500t-22.500 9.500h-1344q-13 0-22.500-9.500t-9.500-22.500v-192q0-13 9.500-22.500t22.500-9.500h1344q13 0 22.500 9.500t9.500 22.500zM256 160v192q0 13-9.500 22.500t-22.500 9.500h-192q-13 0-22.500-9.500t-9.500-22.500v-192q0-13 9.500-22.500t22.500-9.500h192q13 0 22.500 9.500t9.500 22.500zM1792 928v192q0 13-9.500 22.500t-22.500 9.500h-1344q-13 0-22.500-9.500t-9.500-22.500v-192q0-13 9.500-22.500t22.500-9.500h1344q13 0 22.500 9.500t9.500 22.500zM1792 544v192q0 13-9.500 22.500t-22.500 9.500h-1344q-13 0-22.500-9.500t-9.500-22.500v-192q0-13 9.500-22.500t22.500-9.500h1344q13 0 22.500 9.500t9.500 22.500zM1792 160v192q0 13-9.500 22.500t-22.500 9.500h-1344q-13 0-22.500-9.500t-9.500-22.500v-192q0-13 9.500-22.500t22.500-9.500h1344q13 0 22.500 9.500t9.500 22.500z"/></svg>
<div id="ft"></div>
<svg class="ic" style="left:212px;top:566px" width="14.2" height="13.7" viewBox="0 0 14.2 13.7"><path d="M7.32 0.88L1.77 6.85L7.32 12.82" fill="none" stroke="#c4c4c8" stroke-width="2.5"/><path d="M7.32 0.88L1.77 6.85L7.32 12.82" transform="translate(6,0)" fill="none" stroke="#c4c4c8" stroke-width="2.5"/></svg>
<svg class="ic" style="left:245px;top:564.8px" width="9.8" height="14.6" viewBox="0 0 9.8 14.6"><path d="M8.74 1.06L2.12 7.30L8.74 13.54" fill="none" stroke="#c4c4c8" stroke-width="3.0"/></svg>
<span class="x" style="left:280.7px;top:564.6px;font-size:11px;line-height:12px;color:#444;transform:scaleX(1.045);">Page</span>
<div class="abs" style="left:315px;top:560.5px;width:25px;height:24px;background:#fafafb"></div>
<span class="x" style="left:320.7px;top:563.7px;font-size:12.8px;line-height:15px;color:#7b7b98;">1</span>
<span class="x" style="left:358.6px;top:564.6px;font-size:11px;line-height:12px;color:#444;transform:scaleX(1.138);">of 6</span>
<svg class="ic" style="left:399.8px;top:564.8px" width="9.8" height="14.6" viewBox="0 0 9.8 14.6"><path d="M1.06 1.06L7.68 7.30L1.06 13.54" fill="none" stroke="#999" stroke-width="3.0"/></svg>
<svg class="ic" style="left:428px;top:566px" width="14.2" height="13.7" viewBox="0 0 14.2 13.7"><path d="M0.88 0.88L6.43 6.85L0.88 12.82" fill="none" stroke="#999" stroke-width="2.5"/><path d="M0.88 0.88L6.43 6.85L0.88 12.82" transform="translate(6,0)" fill="none" stroke="#999" stroke-width="2.5"/></svg>
<svg class="ic " style="left:466.2px;top:564.8px" width="16" height="16" viewBox="0 0 1792 1792"><path fill="#999" d="M1639 1056q0 5-1 7-64 268-268 434.500t-478 166.500q-146 0-282.500-55t-243.500-157l-129 129q-19 19-45 19t-45-19-19-45v-448q0-26 19-45t45-19h448q26 0 45 19t19 45-19 45l-137 137q71 66 161 102t187 36q134 0 250-65t186-179q11-17 53-117 8-23 30-23h192q13 0 22.500 9.500t9.500 22.500zM1664 256v448q0 26-19 45t-45 19h-448q-26 0-45-19t-19-45 19-45l138-138q-148-137-349-137-134 0-250 65t-186 179q-11 17-53 117-8 23-30 23h-199q-13 0-22.500-9.500t-9.500-22.500v-7q65-268 270-434.500t480-166.500q146 0 284 55.500t245 156.500l130-129q19-19 45-19t45 19 19 45z"/></svg>
<div class="abs" style="left:268px;top:566px;width:1px;height:14px;background:#dfdfe5"></div>
<div class="abs" style="left:385px;top:566px;width:1px;height:14px;background:#dfdfe5"></div>
<div class="abs" style="left:454px;top:566px;width:1px;height:14px;background:#dfdfe5"></div>
<div class="abs" style="left:1133px;top:566px;width:1px;height:14px;background:#dfdfe5"></div>
<span class="x" style="left:1002.2px;top:564.8px;font-size:11.3px;line-height:12px;color:#444;transform:scaleX(1.046);">Displaying 1 - 25 of 127</span>
<span class="x" style="left:1141.4px;top:564.8px;font-size:11.3px;line-height:12px;color:#55557a;transform:scaleX(0.996);">Page size:</span>
<div class="abs" style="left:1206.5px;top:561px;width:55.5px;height:24px;background:#fafafb"></div>
<span class="x" style="left:1212.1px;top:565.0px;font-size:12.6px;line-height:14px;color:#686888;">25</span>
<div class="abs" style="left:1245.5px;top:569.5px;border-left:5px solid transparent;border-right:5px solid transparent;border-top:5.5px solid #a0a0a0"></div>
</body></html>
